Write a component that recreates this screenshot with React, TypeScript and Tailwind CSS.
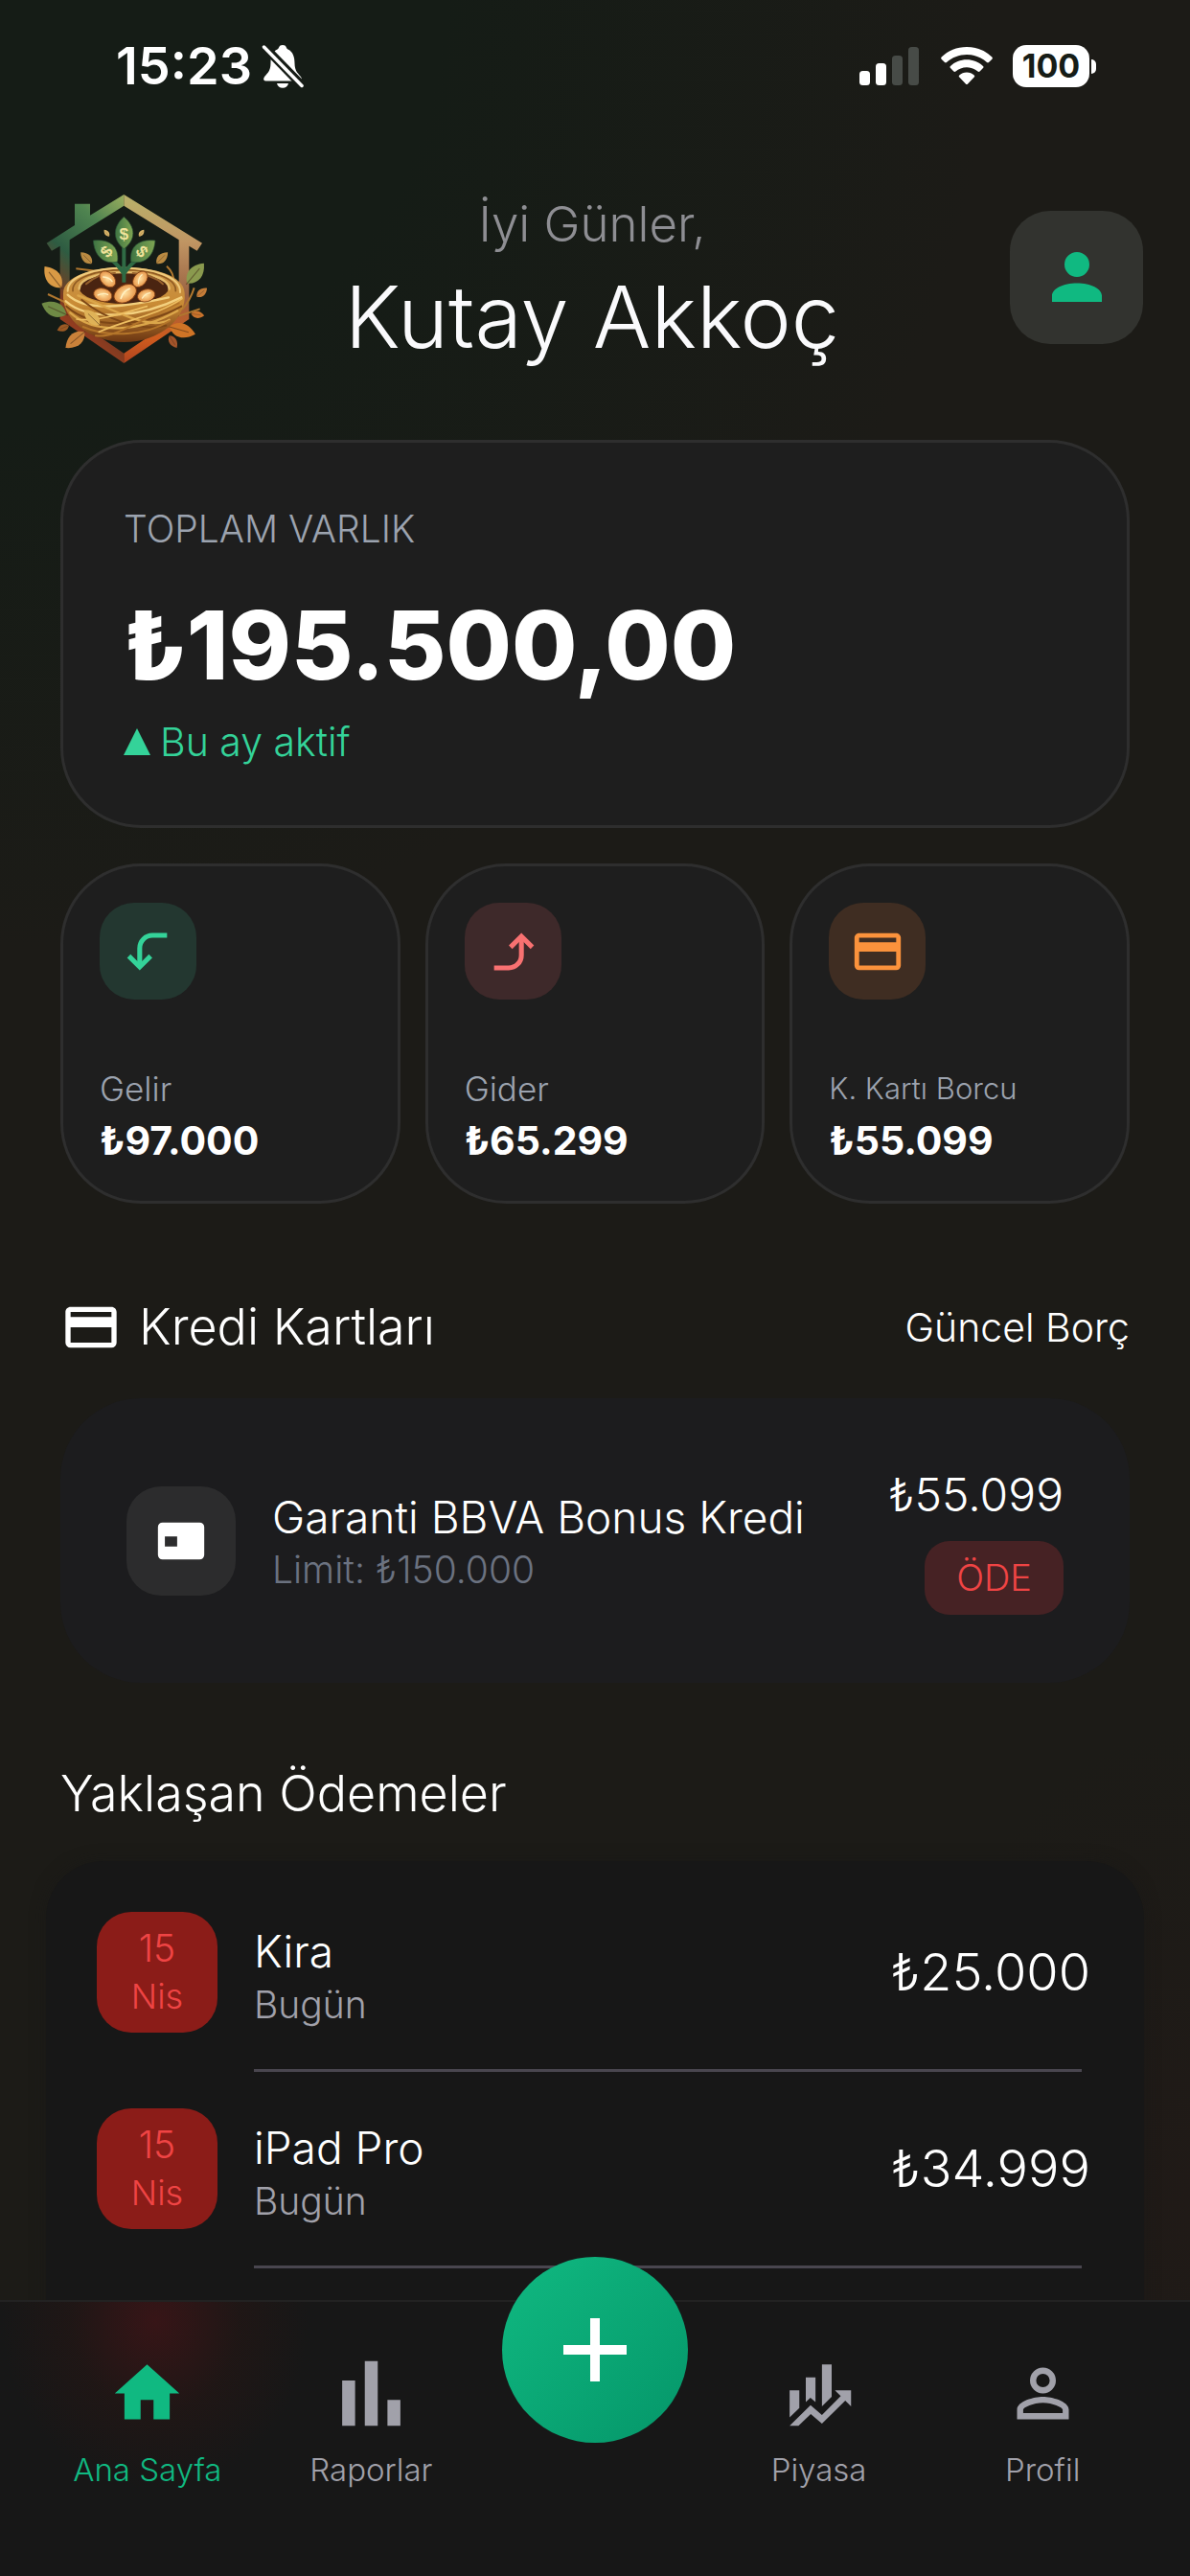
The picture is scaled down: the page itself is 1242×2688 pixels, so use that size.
import React from "react";

const icons = {
  home: "M10,20V14H14V20H19V12H22L12,3L2,12H5V20H10Z",
  poll: "M3,22V8H7V22H3M10,22V2H14V22H10M17,22V14H21V22H17Z",
  finance:
    "M6,16.5L3,19.44V11H6M11,14.66L9.43,13.32L8,14.64V7H11M16,13L13,16V3H16M18.81,12.81L17,11H22V16L20.21,14.21L13,21.36L9.53,18.34L5.75,22H3L9.47,15.66L13,18.64",
  accountOutline:
    "M12,4A4,4 0 0,1 16,8A4,4 0 0,1 12,12A4,4 0 0,1 8,8A4,4 0 0,1 12,4M12,5.9A2.1,2.1 0 0,0 9.9,8A2.1,2.1 0 0,0 12,10.1A2.1,2.1 0 0,0 14.1,8A2.1,2.1 0 0,0 12,5.9M12,13C14.67,13 20,14.33 20,17V20H4V17C4,14.33 9.33,13 12,13M12,14.9C9.03,14.9 5.9,16.36 5.9,17V18.1H18.1V17C18.1,16.36 14.97,14.9 12,14.9Z",
  account:
    "M12,4A4,4 0 0,1 16,8A4,4 0 0,1 12,12A4,4 0 0,1 8,8A4,4 0 0,1 12,4M12,14C16.42,14 20,15.79 20,18V20H4V18C4,15.79 7.58,14 12,14Z",
  card: "M20,8H4V6H20M20,18H4V12H20M20,4H4C2.89,4 2,4.89 2,6V18A2,2 0 0,0 4,20H20A2,2 0 0,0 22,18V6C22,4.89 21.1,4 20,4Z",
  chip: "M20,4H4A2,2 0 0,0 2,6V18A2,2 0 0,0 4,20H20A2,2 0 0,0 22,18V6A2,2 0 0,0 20,4M10.3,14.4H5V10H10.3Z",
};

const Icon = ({ path, className }: { path: string; className: string }) => (
  <svg viewBox="0 0 24 24" fill="currentColor" fillRule="evenodd" className={className} aria-hidden="true">
    <path d={path} />
  </svg>
);

const BentArrow = ({ up = false }: { up?: boolean }) => (
  <svg
    viewBox="0 0 24 24"
    fill="none"
    stroke="currentColor"
    strokeWidth="2.1"
    className="h-[58px] w-[58px]"
    aria-hidden="true"
  >
    <g transform={up ? "rotate(180 12 12)" : undefined}>
      <path d="M20 5H13.7A5.5 5.5 0 0 0 8.2 10.5V18.4" />
      <path d="M3.5 13.9L8.2 18.6L12.9 13.9" />
    </g>
  </svg>
);

const Leaf = ({ x, y, angle, size, fill }: { x: number; y: number; angle: number; size: number; fill: string }) => (
  <g transform={`translate(${x} ${y}) rotate(${angle}) scale(${size})`}>
    <path d="M0 0C-34 -24 -36 -64 0 -100C36 -64 34 -24 0 0Z" fill={fill} />
    <path d="M0 6V-74" stroke="#3b2413" strokeOpacity=".5" strokeWidth="4" fill="none" />
  </g>
);

const Seed = ({ x, y, angle, size }: { x: number; y: number; angle: number; size: number }) => (
  <g transform={`translate(${x} ${y}) rotate(${angle}) scale(${size})`}>
    <ellipse rx="36" ry="25" fill="url(#seed)" stroke="#7a3a12" strokeWidth="3" />
    <path d="M-18 6Q0 -10 18 -6" stroke="#fff0c0" strokeWidth="5" fill="none" strokeLinecap="round" />
  </g>
);

const Logo = () => (
  <svg viewBox="69 46 522 564" className="h-[188px] w-[174px]" role="img" aria-label="Logo">
    <defs>
      <linearGradient id="houseLeft" x1="1" y1="0" x2="0.6" y2="1">
        <stop offset="0" stopColor="#9aae5e" />
        <stop offset=".25" stopColor="#4f8450" />
        <stop offset=".55" stopColor="#2e5c42" />
        <stop offset=".8" stopColor="#7c3a20" />
        <stop offset="1" stopColor="#a93f20" />
      </linearGradient>
      <linearGradient id="houseRight" x1="0" y1="0" x2="0" y2="1">
        <stop offset="0" stopColor="#b9b26a" />
        <stop offset=".28" stopColor="#c09563" />
        <stop offset=".6" stopColor="#9a6242" />
        <stop offset=".85" stopColor="#cf5c1e" />
        <stop offset="1" stopColor="#b0431f" />
      </linearGradient>
      <linearGradient id="nest" x1="0" y1="0" x2="0" y2="1">
        <stop offset="0" stopColor="#c9954a" />
        <stop offset=".5" stopColor="#c98b35" />
        <stop offset="1" stopColor="#6b3512" />
      </linearGradient>
      <radialGradient id="seed">
        <stop offset="0" stopColor="#ffe0a0" />
        <stop offset="1" stopColor="#e8974a" />
      </radialGradient>
      <linearGradient id="sprout" x1="0" y1="0" x2="1" y2="0">
        <stop offset="0" stopColor="#3f7443" />
        <stop offset="1" stopColor="#7fa552" />
      </linearGradient>
    </defs>

    <path
      d="M328 70L222 135V99H174V166L86 222L102 246L128 231V460L328 598V567L158 450V212L328 105Z"
      fill="url(#houseLeft)"
    />
    <path d="M328 70L573 222L557 246L532 231V460L328 598V567L500 450V212L328 105Z" fill="url(#houseRight)" />

    <Leaf x={132} y={362} angle={-38} size={0.85} fill="#d99a45" />
    <Leaf x={148} y={446} angle={-66} size={0.85} fill="#6f8a45" />
    <Leaf x={205} y={500} angle={-130} size={0.78} fill="#c9813a" />
    <Leaf x={156} y={480} angle={-112} size={0.4} fill="#9c5a24" />
    <Leaf x={526} y={348} angle={40} size={0.82} fill="#8a9a4e" />
    <Leaf x={556} y={390} angle={50} size={0.42} fill="#c47c38" />
    <Leaf x={538} y={443} angle={98} size={0.42} fill="#c9732c" />
    <Leaf x={470} y={484} angle={106} size={0.85} fill="#cf7426" />
    <Leaf x={470} y={512} angle={148} size={0.45} fill="#a2542a" />
    <Leaf x={228} y={286} angle={-45} size={0.5} fill="#b98a42" />
    <Leaf x={430} y={286} angle={45} size={0.5} fill="#b98a42" />
    <Leaf x={282} y={201} angle={-38} size={0.26} fill="#d9b468" />
    <Leaf x={375} y={201} angle={38} size={0.26} fill="#d9b468" />

    <path
      d="M178 302Q240 308 300 320M90 382L150 410M462 294Q486 316 484 346M548 362Q536 400 510 430M566 428L500 450"
      stroke="#b0772f"
      strokeWidth="6"
      fill="none"
    />
    <path d="M138 380C138 270 515 270 518 378C526 458 440 532 328 532C222 532 132 460 138 380Z" fill="url(#nest)" />
    <ellipse cx="328" cy="362" rx="140" ry="50" fill="#4a2411" />
    <g fill="none" strokeLinecap="round">
      <path d="M188 366C184 296 472 296 470 366" stroke="#e6bd6c" strokeWidth="7" />
      <path d="M168 372C160 284 496 284 490 372" stroke="#8f5a22" strokeWidth="5" />
      <path d="M152 372C150 276 508 276 504 376" stroke="#f0cb7c" strokeWidth="6" />
      <path d="M210 350Q250 315 300 316M356 316Q420 320 450 350" stroke="#96602c" strokeWidth="6" />
      <path d="M152 384C210 440 340 420 468 392M146 404C220 468 380 456 508 392" stroke="#f3d07e" strokeWidth="7" />
      <path d="M148 420C240 500 400 480 508 420M196 400C270 460 380 500 460 480" stroke="#7d4716" strokeWidth="6" />
      <path d="M160 440C240 510 380 500 496 434M184 386C280 420 400 500 470 462" stroke="#dba64a" strokeWidth="7" />
      <path d="M200 484C280 520 400 510 470 466M240 512C300 520 360 470 500 410" stroke="#b4752a" strokeWidth="6" />
      <path d="M250 500C340 460 430 450 510 396M180 460C240 470 330 440 400 420" stroke="#eebf62" strokeWidth="5" />
    </g>
    <Leaf x={252} y={478} angle={-46} size={0.68} fill="#dfb257" />

    <path d="M328 345V200M328 318Q310 290 284 270M328 318Q346 290 374 270" stroke="#2f6a44" strokeWidth="12" fill="none" />
    <g stroke="#274f33" strokeWidth="2">
      <path d="M328 240C292 212 292 172 328 140C366 172 366 212 328 240Z" fill="url(#sprout)" />
      <path d="M308 280C270 290 236 268 232 214C282 208 314 232 308 280Z" fill="url(#sprout)" />
      <path d="M350 280C388 290 422 268 426 214C376 208 344 232 350 280Z" fill="url(#sprout)" />
    </g>
    <g fill="#f0e39a" fontFamily="Liberation Sans, sans-serif" fontWeight="700" fontSize="52" textAnchor="middle">
      <text x="328" y="212">$</text>
      <text x="274" y="266" transform="rotate(-50 274 249)">$</text>
      <text x="384" y="266" transform="rotate(50 384 249)">$</text>
    </g>
    <Seed x={277} y={335} angle={45} size={0.82} />
    <Seed x={379} y={335} angle={-50} size={0.78} />
    <Seed x={262} y={384} angle={15} size={0.82} />
    <Seed x={398} y={386} angle={-15} size={0.78} />
    <Seed x={332} y={380} angle={-30} size={1.05} />
  </svg>
);

const StatusBar = () => (
  <div className="flex h-[138px] shrink-0 items-center justify-between pr-[98px] pl-[121px] text-white">
    <div className="flex items-center gap-[10px]">
      <span className="text-[54px] leading-[66px] font-semibold">15:23</span>
      <svg viewBox="0 0 44 46" className="h-[46px] w-[44px]" aria-hidden="true">
        <path
          d="M22 1C17.5 1 18.6 4.5 16.5 5.5C11 8 9.5 14 9.5 20C9.5 29 5 31 2.5 35C1.5 37 2.5 38.5 4.5 38.5H39.5C41.5 38.5 42.5 37 41.5 35C39 31 34.5 29 34.5 20C34.5 14 33 8 27.5 5.5C25.4 4.5 26.5 1 22 1Z"
          fill="white"
        />
        <path d="M16 41H28C27.5 44 25 45.8 22 45.8C19 45.8 16.5 44 16 41Z" fill="white" />
        <path d="M3 3L42 43" stroke="#161c16" strokeWidth="9" />
        <path d="M2.5 3L42 43.5" stroke="white" strokeWidth="3.5" strokeLinecap="round" />
      </svg>
    </div>
    <div className="flex items-center">
      <svg viewBox="0 0 62 40" className="mr-[23px] h-[40px] w-[62px]" aria-hidden="true">
        <rect x="0" y="25" width="11" height="15" rx="3.5" fill="white" />
        <rect x="17" y="17" width="11" height="23" rx="3.5" fill="white" />
        <rect x="34" y="9" width="11" height="31" rx="3.5" fill="#474b47" />
        <rect x="51" y="0" width="11" height="40" rx="3.5" fill="#474b47" />
      </svg>
      <svg viewBox="0 0 54 40" className="mr-[21px] h-[40px] w-[54px]" fill="white" aria-hidden="true">
        <path d="M27 0C37.4 0 46.5 4 53.3 10.5C54 11.2 54 12 53.4 12.7L50 16.1C49.4 16.7 48.6 16.7 48 16.1C42.5 11 35 8 27 8C19 8 11.5 11 6 16.1C5.4 16.7 4.6 16.7 4 16.1L.6 12.7C0 12 0 11.2 .7 10.5C7.5 4 16.6 0 27 0Z" />
        <path d="M27 13.3C33.6 13.3 39.5 15.8 44 19.9C44.7 20.6 44.7 21.4 44 22.1L40.6 25.5C40 26.1 39.2 26.1 38.5 25.5C35.5 22.9 31.5 21.3 27 21.3C22.5 21.3 18.5 22.9 15.5 25.5C14.8 26.1 14 26.1 13.4 25.5L10 22.1C9.3 21.4 9.3 20.6 10 19.9C14.5 15.8 20.4 13.3 27 13.3Z" />
        <path d="M27 26.5C30 26.5 32.7 27.6 34.7 29.4C35.4 30 35.4 30.9 34.7 31.6L28.1 38.4C27.4 39.1 26.6 39.1 25.9 38.4L19.3 31.6C18.6 30.9 18.6 30 19.3 29.4C21.3 27.6 24 26.5 27 26.5Z" />
      </svg>
      <span className="flex h-[44px] w-[80px] items-center justify-center rounded-[14px] bg-white text-[34px] leading-[44px] font-bold text-[#161c16]">
        100
      </span>
      <span className="ml-[2px] h-[15px] w-[5px] rounded-r-full bg-white" />
    </div>
  </div>
);

const Header = () => (
  <header className="grid grid-cols-[1fr_auto_1fr] items-center pt-[54px] pr-[49px] pb-[73px] pl-[43px]">
    <Logo />
    <div className="text-center">
      <p className="text-[51px] leading-[84px] text-[#8e8e93]">İyi Günler,</p>
      <h1 className="text-[90px] leading-[110px] text-[#fafafc]">Kutay Akkoç</h1>
    </div>
    <button
      aria-label="Profil"
      className="flex h-[139px] w-[139px] items-center justify-center justify-self-end rounded-[42px] bg-[#32332f] text-[#10b981]"
    >
      <Icon path={icons.account} className="h-[78px] w-[78px]" />
    </button>
  </header>
);

const stats = [
  {
    label: "Gelir",
    amount: "₺97.000",
    box: "bg-[#233730] text-[#34d399]",
    size: "text-[35px]",
    icon: <BentArrow />,
  },
  {
    label: "Gider",
    amount: "₺65.299",
    box: "bg-[#3e292a] text-[#f87171]",
    size: "text-[35px]",
    icon: <BentArrow up />,
  },
  {
    label: "K. Kartı Borcu",
    amount: "₺55.099",
    box: "bg-[#3f2d22] text-[#fb923c]",
    size: "text-[31px]",
    icon: <Icon path={icons.card} className="h-[58px] w-[58px]" />,
  },
];

const payments = [
  { title: "Kira", amount: "₺25.000" },
  { title: "iPad Pro", amount: "₺34.999" },
];

const NavItem = ({ icon, label, active = false }: { icon: string; label: string; active?: boolean }) => (
  <a
    href="#"
    className={
      "flex flex-1 flex-col items-center pt-[55px] text-[33px] leading-[48px] font-light " +
      (active ? "text-[#10b981]" : "text-[#a1a1aa]")
    }
  >
    <Icon path={icon} className="mb-[15px] h-[81px] w-[81px]" />
    {label}
  </a>
);

const App = () => {
  return (
    <div className="flex h-screen flex-col overflow-hidden bg-[#1c1b17] bg-[radial-gradient(300px_500px_at_100%_2300px,#201a17,#201a1700),radial-gradient(1150px_1100px_at_0_0,#151c16_40%,#1c1b17_90%)] font-['Inter',sans-serif] text-white">
      <StatusBar />
      <main className="min-h-0 flex-1 overflow-hidden font-light">
        <Header />
        <div className="px-[63px]">
          <section className="rounded-[84px] border-3 border-[#2e2e2e] bg-[#1e1e1e] px-[63px] pt-[63px] pb-[60px]">
            <p className="text-[39px] leading-[54px] text-[#9ca3af]">TOPLAM VARLIK</p>
            <p className="mt-[34px] mb-[14px] text-[99px] leading-[120px] font-extrabold">₺195.500,00</p>
            <p className="flex items-center gap-[10px] text-[41px] leading-[54px] text-[#34d399]">
              <svg viewBox="0 0 28 28" className="h-[28px] w-[28px]" aria-hidden="true">
                <path d="M14 0L28 28H0Z" fill="currentColor" />
              </svg>
              Bu ay aktif
            </p>
          </section>

          <section className="mt-[37px] grid grid-cols-3 gap-[26px]">
            {stats.map((s) => (
              <div key={s.label} className="rounded-[84px] border-3 border-[#2e2e2e] bg-[#1e1e1e] p-[38px] pb-[36px]">
                <div className={"mb-[66px] flex h-[101px] w-[101px] items-center justify-center rounded-[36px] " + s.box}>
                  {s.icon}
                </div>
                <p className={"leading-[54px] text-[#9ca3af] " + s.size}>{s.label}</p>
                <p className="text-[41px] leading-[54px] font-bold">{s.amount}</p>
              </div>
            ))}
          </section>

          <div className="mt-[96px] flex items-center justify-between leading-[66px]">
            <h2 className="flex items-center gap-[18px] text-[52px]">
              <Icon path={icons.card} className="h-[64px] w-[64px]" />
              Kredi Kartları
            </h2>
            <span className="text-[41px]">Güncel Borç</span>
          </div>

          <section className="mt-[41px] flex items-center rounded-[84px] bg-[#1c1c1e] px-[69px] py-[71px]">
            <div className="flex h-[114px] w-[114px] shrink-0 items-center justify-center rounded-[36px] bg-[#2c2c2d]">
              <Icon path={icons.chip} className="h-[58px] w-[58px]" />
            </div>
            <div className="ml-[38px] grow">
              <p className="text-[46px] leading-[60px]">Garanti BBVA Bonus Kredi</p>
              <p className="text-[39px] leading-[50px] text-[#6b7280]">Limit: ₺150.000</p>
            </div>
            <div className="flex flex-col items-end">
              <p className="text-[48px] leading-[60px]">₺55.099</p>
              <button className="mt-[18px] rounded-[26px] bg-[#462224] px-[33px] text-[38px] leading-[77px] text-[#ef4444]">
                ÖDE
              </button>
            </div>
          </section>

          <h2 className="mt-[83px] text-[52px] leading-[66px]">Yaklaşan Ödemeler</h2>
        </div>

        <section className="mx-[48px] mt-[37px] h-[600px] rounded-[60px] bg-[#171717] pt-[53px] pr-[56px] pl-[53px] shadow-[0_0_16px_#17171780]">
          {payments.map((p) => (
            <div key={p.title} className="mb-[38px] flex gap-[38px]">
              <div className="flex h-[126px] w-[126px] flex-col justify-center rounded-[36px] bg-[#8b1c18] text-center leading-[50px] text-[#ef4444]">
                <span className="text-[39px]">15</span>
                <span className="text-[36px]">Nis</span>
              </div>
              <div className="grow">
                <div className="flex h-[126px] items-center justify-between">
                  <div>
                    <p className="text-[46px] leading-[66px]">{p.title}</p>
                    <p className="text-[39px] leading-[45px] text-[#a1a1aa]">Bugün</p>
                  </div>
                  <p className="text-[54px] leading-[66px]">{p.amount}</p>
                </div>
                <hr className="mt-[38px] mr-[9px] border-t-3 border-[#49464f]" />
              </div>
            </div>
          ))}
        </section>
      </main>

      <nav className="relative flex h-[288px] shrink-0 border-t-2 border-[#222222] bg-[#171717] bg-[radial-gradient(160px_175px_at_162px_20px,#371517,#27161480_55%,#17171700)] px-[37px]">
        <NavItem icon={icons.home} label="Ana Sayfa" active />
        <NavItem icon={icons.poll} label="Raporlar" />
        <div className="flex flex-1 justify-center">
          <button
            aria-label="Ekle"
            className="-mt-[47px] flex h-[194px] w-[194px] items-center justify-center rounded-full bg-linear-to-br from-[#10b981] to-[#059669]"
          >
            <svg viewBox="0 0 66 66" className="h-[66px] w-[66px]" aria-hidden="true">
              <path d="M33 0V66M0 33H66" stroke="white" strokeWidth="10" />
            </svg>
          </button>
        </div>
        <NavItem icon={icons.finance} label="Piyasa" />
        <NavItem icon={icons.accountOutline} label="Profil" />
      </nav>
    </div>
  );
};

export default App;
